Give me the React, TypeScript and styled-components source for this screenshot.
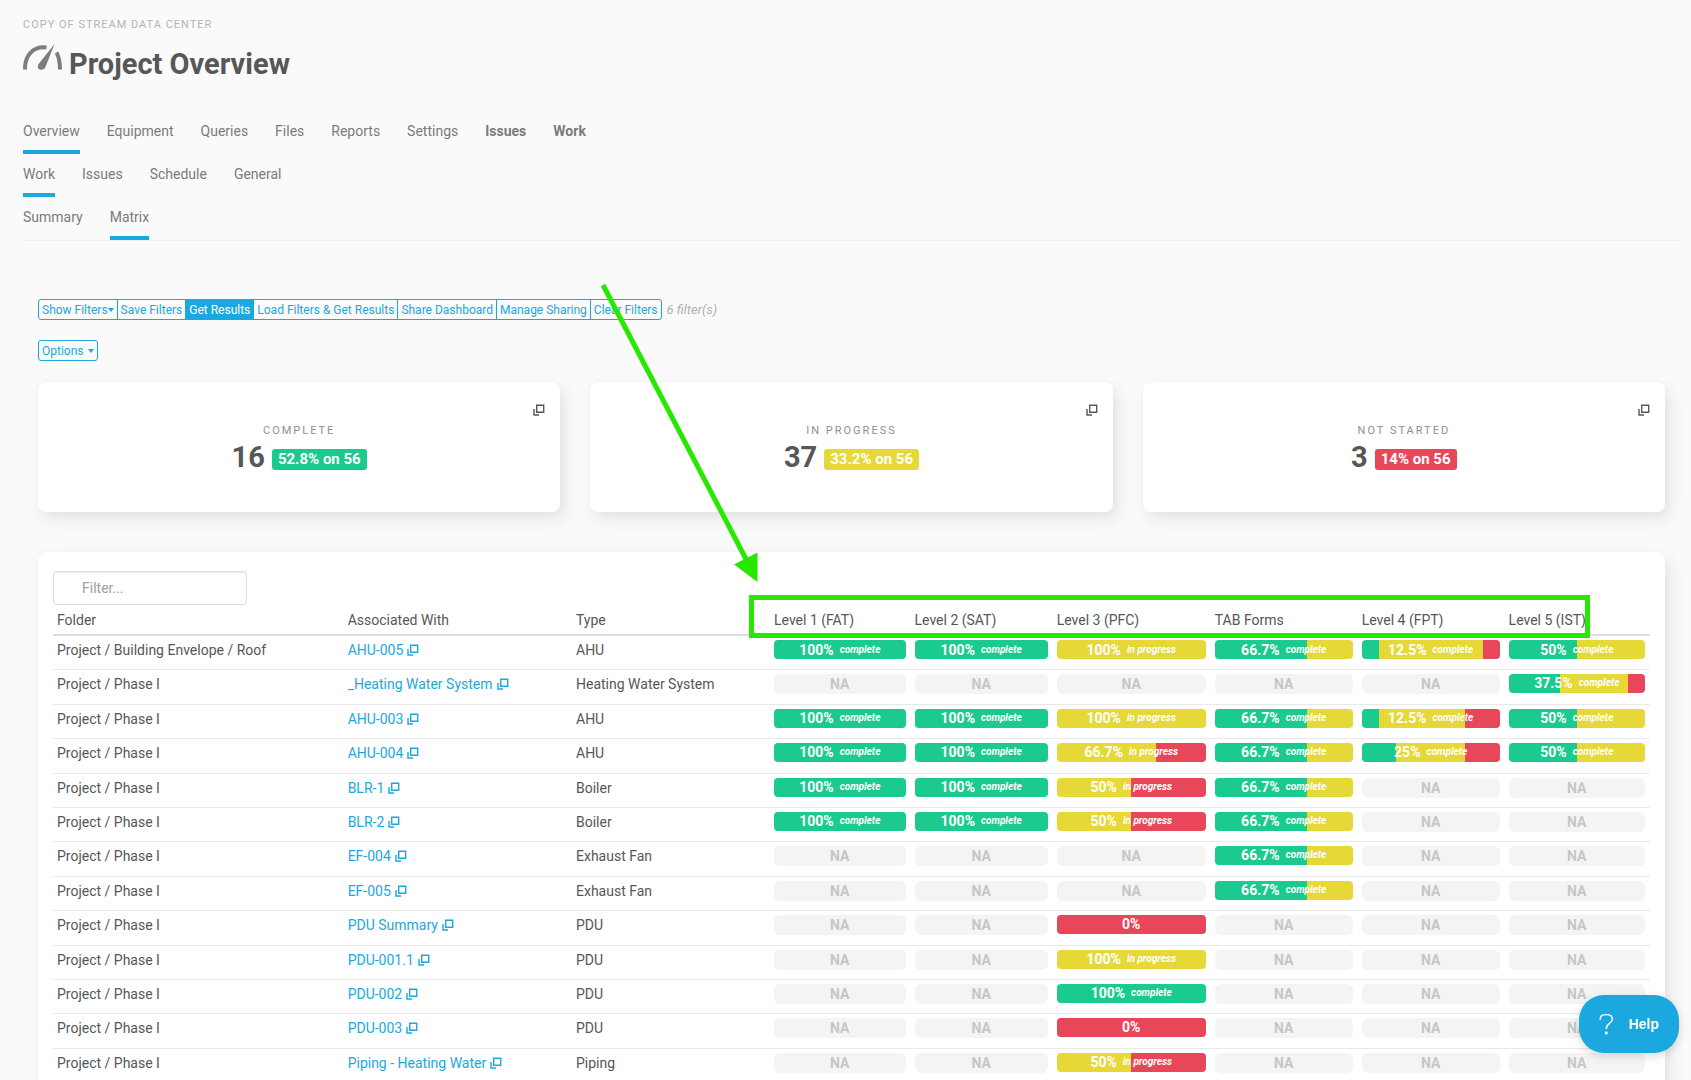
import React from "react";
import styled, { createGlobalStyle, css } from "styled-components";

const BLUE = "#1ba8df";
const GREEN = "#1bca8f";
const YELLOW = "#e6d937";
const RED = "#e84759";

const GlobalStyle = createGlobalStyle`
  *, *::before, *::after { box-sizing: border-box; }
  html, body { margin: 0; background: #fafafa; }
  body {
    height: 100vh;
    overflow: hidden;
    font-family: Roboto, "Liberation Sans", sans-serif;
    font-size: 14px;
    line-height: 20px;
    color: #555758;
  }
  button, input { font: inherit; }
`;

const Page = styled.div`
  position: relative;
  padding: 17px 13px 0 23px;
`;

const Eyebrow = styled.div`
  font-size: 11px;
  line-height: 16px;
  letter-spacing: 1px;
  text-transform: uppercase;
  color: #b4b4b4;
`;

const TitleRow = styled.header`
  display: flex;
  gap: 7px;
  height: 63px;
  padding-top: 11px;
`;

const Title = styled.h1`
  margin: 0;
  font-size: 29px;
  line-height: 40px;
  font-weight: 700;
  color: #555758;
`;

const Tabs = styled.nav`
  display: flex;
  gap: 27px;
  height: 43px;
`;

const TabGroup = styled.div`
  margin-top: 15px;
  border-bottom: 1px solid #efefef;
`;

const Tab = styled.a<{ $active?: boolean; $bold?: boolean }>`
  padding-top: 10px;
  border-bottom: 4px solid ${(p) => (p.$active ? BLUE : "transparent")};
  color: #7b7b7b;
  font-weight: ${(p) => (p.$bold ? 700 : 400)};
  text-decoration: none;
`;

const Content = styled.main`
  padding: 58px 13px 0 15px;
`;

const Toolbar = styled.div`
  display: flex;
  align-items: center;
  gap: 5px;
  margin-bottom: 20px;
`;

const ButtonGroup = styled.div`
  display: flex;
`;

const outline = css`
  height: 21px;
  padding: 0 3px;
  border: 1px solid ${BLUE};
  font-size: 12px;
  line-height: 18px;
  cursor: pointer;
  white-space: nowrap;
`;

const ToolButton = styled.button<{ $active?: boolean }>`
  ${outline}
  background: ${(p) => (p.$active ? BLUE : "transparent")};
  color: ${(p) => (p.$active ? "#fff" : BLUE)};
  & + & { margin-left: -1px; }
  &:first-child { border-radius: 3px 0 0 3px; }
  &:last-child { border-radius: 0 3px 3px 0; }
  &:only-child { border-radius: 3px; }
`;

const Caret = styled.span<{ $spaced?: boolean }>`
  display: inline-block;
  margin-left: ${(p) => (p.$spaced ? 4 : 0)}px;
  border: 3px solid transparent;
  border-top: 4px solid currentColor;
  border-bottom: 0;
  vertical-align: 2px;
`;

const FilterCount = styled.em`
  font-size: 13px;
  color: #b0b0b0;
`;

const Cards = styled.section`
  display: grid;
  grid-template-columns: repeat(3, 1fr);
  gap: 30px;
  margin: 21px 0 40px;
`;

const surface = css`
  background: #fff;
  border-radius: 8px;
  box-shadow: 5px 7px 16px rgba(0, 0, 0, 0.09), 0 0 6px rgba(0, 0, 0, 0.02);
`;

const Card = styled.article`
  ${surface}
  display: flex;
  flex-direction: column;
  align-items: center;
  height: 130px;
  padding: 20px 15px;
`;

const CardAction = styled.button`
  align-self: flex-end;
  display: flex;
  padding: 2px 0;
  border: 0;
  background: none;
  color: #555758;
  cursor: pointer;
`;

const CardLabel = styled.h2`
  margin: 4px 0 0;
  font-size: 11px;
  line-height: 18px;
  font-weight: 400;
  letter-spacing: 2px;
  text-transform: uppercase;
  color: #8e9090;
`;

const CardValue = styled.div`
  display: flex;
  align-items: center;
  gap: 7px;
  font-size: 29px;
  line-height: 34px;
  font-weight: 700;
`;

const Badge = styled.span<{ $color: string }>`
  margin-top: 5px;
  padding: 0 6px;
  border-radius: 3px;
  background: ${(p) => p.$color};
  color: #fff;
  font-size: 15px;
  line-height: 21px;
`;

const Panel = styled.section`
  ${surface}
  padding: 19px 15px;
`;

const FilterInput = styled.input`
  display: block;
  width: 194px;
  height: 34px;
  padding: 0 28px;
  border: 1px solid #dcdcdc;
  border-radius: 4px;
  box-shadow: inset 0 1px 1px rgba(0, 0, 0, 0.07);
  background: #fff;
  outline: 0;
  &::placeholder { color: #a0a0a0; opacity: 1; }
`;

const Table = styled.table`
  width: 100%;
  table-layout: fixed;
  border-collapse: collapse;
`;

const Column = styled.col<{ $share: number }>`
  width: ${(p) => p.$share}%;
`;

const HeadCell = styled.th`
  height: 30px;
  padding: 0 5px 0 4px;
  border-bottom: 2px solid #dfdfdf;
  text-align: left;
  font-weight: 400;
  white-space: nowrap;
`;

const Row = styled.tr`
  height: 34px;
  border-bottom: 1px solid #e9e9e9;
  &:nth-child(5n + 2), &:nth-child(5n + 4) { height: 35px; }
`;

const Cell = styled.td`
  padding: 4px 5px 0 4px;
  vertical-align: top;
  white-space: nowrap;
`;

const ItemLink = styled.a`
  color: ${BLUE};
  text-decoration: none;
  svg { margin-left: 4px; vertical-align: -1px; }
`;

const Bar = styled.div<{ $na?: boolean }>`
  display: flex;
  align-items: center;
  justify-content: center;
  gap: 6px;
  height: ${(p) => (p.$na ? 20 : 19)}px;
  border-radius: ${(p) => (p.$na ? 6 : 4)}px;
  background: #f4f4f4;
  color: ${(p) => (p.$na ? "#c6c6c6" : "#fff")};
  font-size: 14px;
  font-weight: 700;
`;

const BarNote = styled.em`
  font-size: 10px;
`;

const HelpButton = styled.button`
  position: fixed;
  right: 12px;
  bottom: 27px;
  display: flex;
  align-items: center;
  gap: 15px;
  width: 100px;
  height: 58px;
  padding: 0 20px;
  border: 0;
  border-radius: 25px;
  background: ${BLUE};
  box-shadow: 0 3px 10px rgba(0, 0, 0, 0.15);
  color: #fff;
  font-family: "Liberation Sans", Arial, sans-serif;
  font-size: 14px;
  font-weight: 700;
  cursor: pointer;
`;

const Annotation = styled.svg`
  position: absolute;
  left: 0;
  top: 0;
  pointer-events: none;
`;

const PopOutIcon = () => (
  <svg width="12" height="12" viewBox="0 0 12 12" fill="none" stroke="currentColor" strokeWidth="1.4" aria-hidden="true">
    <path d="M3.7 1.2h7v7h-7z" />
    <path d="M1 5v6h5" />
  </svg>
);

const GaugeIcon = () => (
  <svg width="39" height="26" viewBox="0 0 39 26" fill="#807b7c" aria-hidden="true">
    <path d="M2 25.5C1.5 11 11 1.5 23.5 3.5" fill="none" stroke="#807b7c" strokeWidth="4" />
    <path d="M31.5 0 22.5 23C21.5 26.5 16 26.5 15 24C14.5 22 15 21 16 19.5Z" />
    <path d="M33.5 8.5C36 13 37 19 37 25.5" fill="none" stroke="#807b7c" strokeWidth="4" />
  </svg>
);

const QuestionIcon = () => (
  <svg width="18" height="26" viewBox="0 0 18 26" fill="none" stroke="#fff" strokeWidth="1.8" strokeLinecap="round" aria-hidden="true">
    <path d="M1.5 7.5V6.5C1.5 3 4 1.5 9 1.5s7.5 1.5 7.5 5.5C16.5 12.5 9 12 9 18.5" />
    <circle cx="9" cy="24" r="0.9" fill="#fff" />
  </svg>
);

type Tabbed = { label: string; active?: boolean; bold?: boolean };

const tabRows: Tabbed[][] = [
  [
    { label: "Overview", active: true },
    { label: "Equipment" },
    { label: "Queries" },
    { label: "Files" },
    { label: "Reports" },
    { label: "Settings" },
    { label: "Issues", bold: true },
    { label: "Work", bold: true },
  ],
  [{ label: "Work", active: true }, { label: "Issues" }, { label: "Schedule" }, { label: "General" }],
  [{ label: "Summary" }, { label: "Matrix", active: true }],
];

const cards = [
  { label: "Complete", value: 16, note: "52.8% on 56", color: GREEN },
  { label: "In Progress", value: 37, note: "33.2% on 56", color: YELLOW },
  { label: "Not Started", value: 3, note: "14% on 56", color: RED },
];

const columns = [
  { label: "Folder", share: 18.2 },
  { label: "Associated With", share: 14.3 },
  { label: "Type", share: 12.4 },
  { label: "Level 1 (FAT)", share: 8.8 },
  { label: "Level 2 (SAT)", share: 8.9 },
  { label: "Level 3 (PFC)", share: 9.9 },
  { label: "TAB Forms", share: 9.2 },
  { label: "Level 4 (FPT)", share: 9.2 },
  { label: "Level 5 (IST)", share: 9.1 },
];

/* done / in progress are percentages of the bar; what is left is not started */
type Progress = { done: number; active: number } | null;
const p = (done: number, active: number): Progress => ({ done, active });
const full = p(100, 0);
const tab = p(66.7, 33.3);
const half = p(50, 50);

const rows: { folder: string; item: string; type: string; levels: Progress[] }[] = [
  { folder: "Project / Building Envelope / Roof", item: "AHU-005", type: "AHU", levels: [full, full, p(0, 100), tab, p(12.5, 75), half] },
  { folder: "Project / Phase I", item: "_Heating Water System", type: "Heating Water System", levels: [null, null, null, null, null, p(37.5, 50)] },
  { folder: "Project / Phase I", item: "AHU-003", type: "AHU", levels: [full, full, p(0, 100), tab, p(12.5, 62.5), half] },
  { folder: "Project / Phase I", item: "AHU-004", type: "AHU", levels: [full, full, p(0, 66.7), tab, p(25, 50), half] },
  { folder: "Project / Phase I", item: "BLR-1", type: "Boiler", levels: [full, full, p(0, 50), tab, null, null] },
  { folder: "Project / Phase I", item: "BLR-2", type: "Boiler", levels: [full, full, p(0, 50), tab, null, null] },
  { folder: "Project / Phase I", item: "EF-004", type: "Exhaust Fan", levels: [null, null, null, tab, null, null] },
  { folder: "Project / Phase I", item: "EF-005", type: "Exhaust Fan", levels: [null, null, null, tab, null, null] },
  { folder: "Project / Phase I", item: "PDU Summary", type: "PDU", levels: [null, null, p(0, 0), null, null, null] },
  { folder: "Project / Phase I", item: "PDU-001.1", type: "PDU", levels: [null, null, p(0, 100), null, null, null] },
  { folder: "Project / Phase I", item: "PDU-002", type: "PDU", levels: [null, null, full, null, null, null] },
  { folder: "Project / Phase I", item: "PDU-003", type: "PDU", levels: [null, null, p(0, 0), null, null, null] },
  { folder: "Project / Phase I", item: "Piping - Heating Water", type: "Piping", levels: [null, null, p(0, 50), null, null, null] },
];

function ProgressBar({ value }: { value: Progress }) {
  if (!value) return <Bar $na>NA</Bar>;
  const { done, active } = value;
  const end = done + active;
  const background = `linear-gradient(90deg, ${GREEN} ${done}%, ${YELLOW} ${done}% ${end}%, ${RED} ${end}%)`;
  const note = done ? "complete" : active ? "in progress" : "";
  return (
    <Bar style={{ background }}>
      {done || active}%{note && <BarNote>{note}</BarNote>}
    </Bar>
  );
}

export default function App() {
  return (
    <>
      <GlobalStyle />
      <Page>
        <Eyebrow>Copy of Stream Data Center</Eyebrow>
        <TitleRow>
          <GaugeIcon />
          <Title>Project Overview</Title>
        </TitleRow>
        <TabGroup>
          {tabRows.map((tabs, i) => (
            <Tabs key={i}>
              {tabs.map((t) => (
                <Tab key={t.label} href="#" $active={t.active} $bold={t.bold}>
                  {t.label}
                </Tab>
              ))}
            </Tabs>
          ))}
        </TabGroup>
        <Content>
          <Toolbar>
            <ButtonGroup>
              <ToolButton>Show Filters<Caret /></ToolButton>
              <ToolButton>Save Filters</ToolButton>
              <ToolButton $active>Get Results</ToolButton>
              <ToolButton>Load Filters &amp; Get Results</ToolButton>
              <ToolButton>Share Dashboard</ToolButton>
              <ToolButton>Manage Sharing</ToolButton>
              <ToolButton>Clear Filters</ToolButton>
            </ButtonGroup>
            <FilterCount>6 filter(s)</FilterCount>
          </Toolbar>
          <ButtonGroup>
            <ToolButton>Options<Caret $spaced /></ToolButton>
          </ButtonGroup>
          <Cards>
            {cards.map((c) => (
              <Card key={c.label}>
                <CardAction aria-label={`Open ${c.label}`}><PopOutIcon /></CardAction>
                <CardLabel>{c.label}</CardLabel>
                <CardValue>
                  {c.value}
                  <Badge $color={c.color}>{c.note}</Badge>
                </CardValue>
              </Card>
            ))}
          </Cards>
          <Panel>
            <FilterInput aria-label="Filter" placeholder="Filter..." />
            <Table>
              <colgroup>
                {columns.map((c) => <Column key={c.label} $share={c.share} />)}
              </colgroup>
              <thead>
                <tr>{columns.map((c) => <HeadCell key={c.label} scope="col">{c.label}</HeadCell>)}</tr>
              </thead>
              <tbody>
                {rows.map((r) => (
                  <Row key={r.item}>
                    <Cell>{r.folder}</Cell>
                    <Cell><ItemLink href="#">{r.item}<PopOutIcon /></ItemLink></Cell>
                    <Cell>{r.type}</Cell>
                    {r.levels.map((v, i) => <Cell key={i}><ProgressBar value={v} /></Cell>)}
                  </Row>
                ))}
              </tbody>
            </Table>
          </Panel>
        </Content>
        <Annotation width="1600" height="650" viewBox="0 0 1600 650" fill="none" aria-hidden="true">
          <path d="M603 285 747 561" stroke="#27e800" strokeWidth="5" />
          <path d="M757.5 582 734 564.5 757.5 552.5Z" fill="#27e800" />
          <rect x="751.5" y="597.5" width="836" height="38" stroke="#27e800" strokeWidth="5" />
        </Annotation>
      </Page>
      <HelpButton>
        <QuestionIcon />
        Help
      </HelpButton>
    </>
  );
}
